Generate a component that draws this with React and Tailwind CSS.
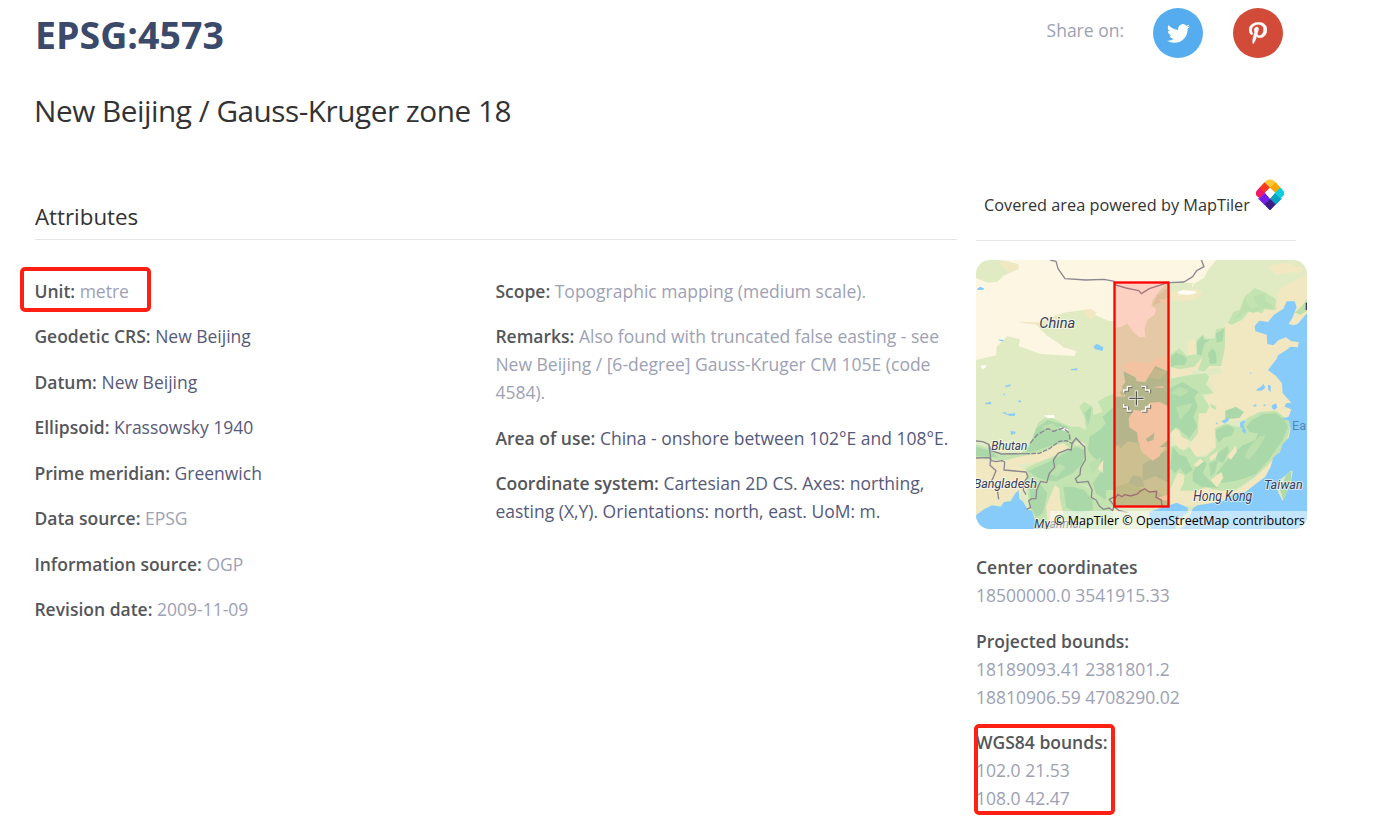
import React from "react";

function Field({ label, value, tone = "text-[#9da1b5]", mark = false }) {
  return (
    <p className="relative mb-[17.45px]">
      {mark && (
        <span className="absolute -left-[14px] -top-[10px] h-[45px] w-[131px] rounded-[5px] border-4 border-[#ff2014]" />
      )}
      <span className="font-semibold text-[#54565a]">{label}</span>{" "}
      <span className={tone}>{value}</span>
    </p>
  );
}

function TwitterIcon() {
  return (
    <svg viewBox="0 0 24 24" className="ml-[1px] h-[23px] w-[23px]" fill="#fff">
      <path d="M23.95 4.57a10 10 0 0 1-2.82.77 4.96 4.96 0 0 0 2.16-2.72c-.95.55-2 .95-3.13 1.18a4.92 4.92 0 0 0-8.38 4.48A13.94 13.94 0 0 1 1.64 3.16a4.92 4.92 0 0 0 1.52 6.57 4.9 4.9 0 0 1-2.23-.61v.06a4.92 4.92 0 0 0 3.95 4.83 5 5 0 0 1-2.21.08 4.94 4.94 0 0 0 4.6 3.42A9.87 9.87 0 0 1 0 19.54a13.99 13.99 0 0 0 7.56 2.21c9.05 0 14-7.5 14-13.98 0-.21 0-.42-.02-.63a9.94 9.94 0 0 0 2.46-2.55z" />
    </svg>
  );
}

function PinterestIcon() {
  return (
    <svg viewBox="0 0 384 512" className="h-[22px] w-[18px]" preserveAspectRatio="none" fill="#fff" stroke="#fff" strokeWidth="10">
      <path d="M204 6.5C101.400 6.500 0 74.900 0 185.600 0 256 39.600 296 63.600 296c9.900 0 15.600-27.600 15.600-35.400 0-9.300-23.700-29.100-23.700-67.800 0-80.400 61.200-137.400 140.400-137.400 68.100 0 118.500 38.700 118.500 109.800 0 53.100-21.300 152.700-90.300 152.700-24.900 0-46.200-18-46.200-43.800 0-37.800 26.400-74.400 26.400-113.400 0-66.200-93.900-54.200-93.900 25.800 0 16.800 2.100 35.400 9.600 50.700-13.800 59.400-42 147.900-42 209.100 0 18.900 2.700 37.500 4.500 56.400 3.400 3.800 1.700 3.400 6.900 1.500 50.400-69 48.600-82.500 71.400-172.800 12.300 23.400 44.100 36 69.300 36 106.200 0 153.900-103.500 153.900-196.800C384 71.300 298.200 6.500 204 6.500z" />
    </svg>
  );
}

function MapTilerLogo() {
  return (
    <svg viewBox="0 0 90 98" className="h-[33px] w-[30px] shrink-0">
      <defs>
        <clipPath id="drop">
          <path d="M45 97 L9 61 Q-4 46 8 34 L31 10 Q45-3 59 10 L82 34 Q94 46 81 61Z" />
        </clipPath>
      </defs>
      <g clipPath="url(#drop)">
        <path d="M45-13 73 15 45 31 17 15Z" fill="#fbc935" />
        <path d="M60 14 68 6 90 30 60 44 45 29Z" fill="#faa600" />
        <path d="M30 14 45 29 30 44 12 29 22 6Z" fill="#fc3b20" />
        <path d="M14 28 31 44 15 61 -6 44Z" fill="#f01963" />
        <path d="M76 28 96 44 75 61 60 44Z" fill="#05d0df" />
        <path d="M60 44 76 60 84 60 62 82 45 61Z" fill="#03a1c4" />
        <path d="M30 44 45 61 28 82 6 60 14 60Z" fill="#761ee8" />
        <path d="M45 61 62 79 45 99 28 79Z" fill="#3d1c88" />
      </g>
      <path d="M45 29 60 44 45 61 30 44Z" fill="#fff" />
    </svg>
  );
}

function MapLabel({ x, y, w, size = 40, children }) {
  return (
    <text
      x={x}
      y={y}
      fontSize={size}
      textLength={w}
      lengthAdjust="spacingAndGlyphs"
      fontStyle="italic"
      fontWeight="400"
      fontFamily="Roboto, sans-serif"
      fill="#3a3c56"
      stroke="#fff"
      strokeWidth="6"
      strokeOpacity="0.6"
      strokeLinejoin="round"
      paintOrder="stroke"
    >
      {children}
    </text>
  );
}

const lakes = [
  "M4 86 12 80 24 85 22 90 4 90Z",
  "M66 239 82 239 82 244 72 243Z",
  "M352 260 362 251 382 262 380 273 358 268Z",
  "M283 328 304 325 304 331 287 331Z",
  "M86 378 103 373 104 378 90 382Z",
  "M83 399 88 405 83 407Z",
  "M27 429 44 425 46 433 28 433Z",
  "M126 423 134 420 134 427 128 427Z",
  "M78 458 88 456 92 462 118 460 117 467 102 468Z",
  "M104 512 118 515 118 521 105 524Z",
  "M821 337 827 340 823 342Z",
  "M842 388 856 380 862 371 868 384 856 392 842 392Z",
  "M876 374 884 377 884 397 877 389Z",
  "M736 484 750 476 760 475 756 484 745 490Z",
  "M718 488 726 488 724 494Z",
  "M792 488 804 480 808 485 802 492 805 505 810 512 807 521 798 513 800 505 793 501Z",
  "M832 436 840 433 842 438 833 440Z",
  "M860 436 869 433 868 439Z",
  "M887 436 900 430 904 442 896 450 888 445Z",
];

const lightGreen = [
  "M582 285 610 265 632 288 662 282 661 240 680 224 690 236 716 235 720 208 748 202 746 268 735 318 700 318 685 335 666 330 680 290 655 320 610 328 582 320Z",
  "M755 190 772 156 790 150 806 110 836 84 870 98 900 118 898 150 866 148 858 160 822 150 796 180 768 194Z",
  "M582 356 640 346 690 340 700 352 690 372 712 400 678 404 700 440 690 460 668 460 666 520 645 545 616 530 600 505 582 520Z",
  "M582 560 600 556 622 572 640 560 660 590 690 590 720 562 716 505 750 490 780 500 800 500 810 476 850 456 900 452 936 480 944 500 925 560 898 590 870 620 838 650 800 676 770 694 720 690 690 682 660 692 612 692 624 660 618 642 604 640 594 662 582 690Z",
  "M700 430 722 440 718 450 704 440Z",
  "M310 440 324 425 350 440 352 465 380 455 366 425 390 410 416 400 416 740 392 744 362 724 340 680 300 668 298 640 310 600 330 580 328 550 290 540 270 520 310 500 330 510 325 470Z",
  "M0 553 45 566 70 586 135 578 170 545 185 490 215 468 240 480 282 500 310 500 310 540 280 560 255 580 240 605 190 610 140 600 70 600 0 592Z",
  "M150 625 200 600 280 552 330 560 326 600 300 640 300 668 340 684 360 720 412 750 412 807 180 807 176 770 160 745 155 700Z",
];

const deepGreen = [
  "M584 290 600 278 620 286 634 296 625 316 606 314 584 320Z",
  "M662 250 680 226 684 240 705 238 684 252 676 286 663 282Z",
  "M720 220 744 206 740 244 722 248Z",
  "M696 280 710 265 720 278 722 310 702 312Z",
  "M582 384 620 366 668 396 655 412 665 440 652 470 664 500 640 535 612 510 600 500 582 518Z",
  "M748 452 780 440 804 456 790 474 748 478Z",
  "M720 510 754 494 776 506 766 528 744 532 728 548 720 530Z",
  "M810 500 828 480 860 462 900 460 925 480 936 500 920 540 898 570 878 600 840 642 802 656 770 664 735 668 722 640 748 606 774 580 800 556 838 540 846 520 820 516Z",
  "M722 582 755 558 758 576 740 610 720 600Z",
  "M700 610 726 600 716 640 704 650Z",
  "M660 620 680 598 692 612 680 640 705 665 726 684 676 680 650 664 650 640Z",
  "M590 560 610 584 630 590 650 630 628 644 612 624 596 640 582 624Z",
  "M325 460 346 440 344 466 336 494Z",
  "M340 530 372 510 390 490 380 470 414 440 414 690 390 690 390 720 360 700 350 670 372 640 376 606 350 590 336 570Z",
  "M0 560 44 572 66 592 0 588Z",
  "M164 550 180 505 216 480 246 490 275 500 286 540 250 548 180 572 150 578Z",
  "M156 634 230 600 300 560 326 570 320 610 290 640 240 664 205 660 180 650Z",
  "M160 680 190 670 214 700 200 760 180 770 164 740Z",
  "M262 680 290 680 324 690 350 720 350 750 300 760 270 740Z",
];

const borders = [
  "M222 0 240 4 246 26 267 56 330 60 384 58 416 64",
  "M580 68 624 66 650 50 662 32 684 20 676 0",
  "M0 543 20 545 38 553 46 572 76 582 148 581",
  "M0 594 40 593 46 602 60 605 78 602 86 606 84 630 150 636 156 650 146 664 142 690 150 704",
  "M44 596 42 616 60 632 52 652 46 664 64 688 68 718",
  "M38 553 42 578 44 596",
  "M152 748 164 742 158 722 168 716 180 716 182 690 194 664 212 668 220 640 236 622 232 600 246 580 276 568 286 570 288 550 296 540 300 534 316 552 326 560 328 600 314 624 312 644 298 656 304 668 336 664 348 690 346 712 360 720 370 738 382 748 400 744 410 752 414 736 400 718 416 710",
  "M414 740 430 752 454 757",
];

const cursorCorners =
  "M443 398V390H454V379H467 M496 379H509V390H520V398 M443 432V441H454V453H467 M496 453H509V441H520V432";

function CoverageMap() {
  return (
    <svg viewBox="0 0 993 807" className="block h-[269px] w-[331px]">
      <rect width="993" height="807" fill="#e1ebc3" />
      <path d="M0 54 34 68 64 65 82 48 128 26 126 12 70 0H724L700 22 684 60 656 70 648 84 600 72 416 74V184L396 182 360 166 322 150 262 158 220 176 176 190 214 228 246 248 262 262 302 274 296 288 192 282 128 258 132 238 94 228 62 260 60 286 0 300Z" fill="#fdf6e3" />
      <path d="M580 66 630 66 660 50 690 24 700 0H760L720 6 690 50 684 66 650 72 640 110 600 110 580 120Z" fill="#e1ebc3" />
      <path d="M720 0H676L684 20 662 34 650 54 624 68 656 70 684 54 696 30Z" fill="#fdf6e3" />
      <g fill="#f1e8c2">
        <path d="M70 8 100 4 104 12 128 14 128 28 96 36 82 22Z" />
        <path d="M128 185 190 187 214 176 250 160 225 180 185 194 144 190Z" />
        <path d="M320 150 344 146 362 158 344 178 330 168Z" />
        <path d="M582 96 660 86 680 98 662 118 620 124 582 122Z" />
        <path d="M876 18 930 8 985 26 970 40 940 36 900 44Z" />
        <path d="M993 44 960 60 915 84 904 104 898 150 862 146 822 154 802 182 748 190 746 268 736 318 690 330 660 328 640 344 582 354 582 322 640 326 690 270 700 300 726 310 740 340 690 348 704 370 712 398 686 412 700 440 668 462 666 520 645 550 636 562 664 590 690 582 720 560 718 510 752 482 810 480 850 454 900 452 938 478 993 440V160Z" />
        <path d="M633 244 660 238 658 290 636 284Z" />
        <path d="M60 606 130 590 190 580 240 554 286 545 280 562 240 590 190 606 120 612 160 640 150 690 110 710 70 736 30 742 0 768V596Z" />
        <path d="M582 520 598 500 622 540 636 552 622 572 600 556Z" />
        <path d="M582 690 596 660 608 638 626 644 624 670 612 690 660 690 690 680 720 690 780 694 820 666 860 632 885 600 900 590 880 640 868 660 820 700 740 722 680 740 580 736Z" />
      </g>
      {lightGreen.map((d) => (
        <path key={d} d={d} fill="#c3e3b1" />
      ))}
      {deepGreen.map((d) => (
        <path key={d} d={d} fill="#aad8a8" />
      ))}
      <g fill="#bbdfad">
        <path d="M772 180 794 154 806 118 822 144 850 142 832 112 866 100 868 126 888 134 890 146 866 142 834 158 806 152 790 172Z" />
        <path d="M340 610 376 590 370 620 346 640Z" />
        <path d="M820 560 850 530 870 526 850 560 820 600 806 590Z" />
        <path d="M600 440 650 430 640 450 612 480Z" />
        <path d="M220 640 250 610 270 622 242 650Z" />
        <path d="M195 500 230 490 250 506 216 514Z" />
        <path d="M584 400 610 380 640 392 616 410Z" />
      </g>
      <g fill="#f1e8c2">
        <path d="M606 505 618 532 640 542 634 560 610 566 598 548Z" />
        <path d="M700 590 726 574 720 592 704 604Z" />
        <path d="M755 588 780 556 782 576 764 600Z" />
        <path d="M652 616 672 596 684 604 664 620Z" />
        <path d="M704 660 736 636 742 654 722 682Z" />
        <path d="M596 660 608 638 626 646 622 672 606 700 590 690Z" />
        <path d="M365 625 382 600 380 640Z" />
        <path d="M210 740 236 676 250 685 252 720 262 760 232 790 214 786Z" />
        <path d="M72 606 130 590 190 580 240 554 262 550 280 562 240 586 190 606 120 614Z" />
      </g>
      <path d="M605 96 620 90 655 93 662 98 640 104 608 103Z M204 466 234 465 236 474 214 475Z M248 500 278 508 276 515 262 512Z M14 318 28 314 30 322 20 328Z" fill="#fffdf5" />
      <path d="M993 160 965 192 952 196 938 192 950 172 962 142 956 124H932L922 146 894 164 876 186 850 182 836 198 838 214 872 224 874 252 892 256 908 240 930 232 946 244 968 246 966 262 944 260 928 272 906 286 902 296 888 314 876 330 900 348 918 370 920 400 946 428 930 430 926 440 946 448 938 470 918 476 938 482 944 506 938 534 920 552 912 576 892 592 884 620 868 650 844 668 808 696 776 700 740 724 690 732 664 736 652 744 634 742 602 728 580 736 560 742 520 756 524 807H993Z" fill="#87cbfa" />
      <path d="M0 766 24 748 48 736 74 740 84 726 104 724 118 700 128 690 130 716 140 724 156 750 168 752 178 784 184 807H0Z" fill="#87cbfa" />
      <path d="M945 632 950 634 944 672 928 706 920 724 908 700 902 680 916 656Z" fill="#e1ebc3" />
      <path d="M930 644 946 634 944 668 922 720 912 690Z" fill="#b0daaa" />
      <path d="M602 782 634 758 640 786 612 807H598Z M634 734 652 742 638 776Z" fill="#d8e7bd" />
      <path d="M956 158 974 142 993 118V152L974 164Z" fill="#bedfab" />
      {lakes.map((d) => (
        <path key={d} d={d} fill="#87cbfa" />
      ))}
      <g fill="none" stroke="#8c878e" strokeWidth="4" strokeLinejoin="round">
        {borders.map((d) => (
          <path key={d} d={d} />
        ))}
        <path d="M148 581 190 580 220 566 250 544 270 542 292 552" strokeDasharray="14 4" />
        <path d="M162 550 184 524 216 506 232 514 262 504 280 520 282 542" strokeDasharray="16 5" />
      </g>

      <MapLabel x="190" y="205" w="108" size="45">China</MapLabel>
      <MapLabel x="46" y="569" w="108" size="38">Bhutan</MapLabel>
      <MapLabel x="-7" y="684" w="190" size="39">Bangladesh</MapLabel>
      <MapLabel x="175" y="805" w="145" size="38">Myanmar</MapLabel>
      <MapLabel x="652" y="724" w="177" size="42">Hong Kong</MapLabel>
      <MapLabel x="864" y="686" w="116" size="39">Taiwan</MapLabel>
      <text x="948" y="509" fontSize="38" fontFamily="Roboto, sans-serif" fill="#5486b5">Ea</text>
      <path d="M989 128H993V150H989Z" fill="#3f415c" />

      <rect x="416" y="68" width="162" height="672" fill="#e5c8a5" />
      <path d="M416 68H576L550 92 530 120 526 138 540 146 536 164 514 180 506 204 508 230 490 232 472 216 454 190 438 200 416 204Z" fill="#fcd1c2" />
      <path d="M544 106 576 84V110L552 128 530 136Z" fill="#e0bd99" />
      <g fill="#f3c3a1">
        <path d="M550 116 576 122 574 130 552 126Z" />
        <path d="M438 316 470 304 520 310 548 292 576 288V330L542 322 520 350 498 362 476 348 452 338Z" />
      </g>
      <path d="M442 334 478 352 482 364 508 366 538 318 578 336V560L540 550 470 560 416 600V410L448 410 438 380 448 366Z" fill="#b5b58c" />
      <path d="M516 352 536 326 574 336 550 358Z M430 400 446 380 442 410Z" fill="#c2b88c" />
      <path d="M416 560 450 544 486 548 500 580 540 600 578 550V740H416Z" fill="#ccc090" />
      <path d="M500 612 578 568V668L536 648 500 664Z M470 646 494 650 506 680 478 682 452 678Z M426 540 460 540 432 566Z" fill="#b7b68d" />
      <path d="M416 680 456 670 510 690 556 702 576 720V740H416Z" fill="#c0ba87" />
      <path d="M458 474 474 450 500 454 522 428 552 426 578 440V546L554 560 552 588 530 602 514 588 498 568 486 544 484 518 460 502Z" fill="#f3c3a1" />
      <path d="M510 536 536 518 532 540 514 546Z M550 562 576 540V560Z" fill="#b5b58c" />
      <path d="M548 712 576 704V722L556 720Z M530 382 560 378 564 384Z" fill="#f3c3a1" />
      <path d="M416 74 450 84 470 88 488 92 496 101 520 86 576 68" fill="none" stroke="#a17779" strokeWidth="4" />
      <path d="M416 716 426 704 438 710 446 704 464 708 484 702 492 694 506 686 520 696 542 694 540 712 556 720 558 738" fill="none" stroke="#a06e70" strokeWidth="4" />
      <rect x="415.500" y="67.500" width="162" height="672" fill="none" stroke="#ff0000" strokeWidth="7" />

      <path d={cursorCorners} fill="none" stroke="#77776a" strokeWidth="7" transform="translate(2 2)" />
      <path d={cursorCorners} fill="none" stroke="#fff" strokeWidth="4" />
      <path d="M457 415H505 M481 391V439" stroke="#e4e1d2" strokeWidth="10" />
      <path d="M460 415H478 M484 415H503 M481 394V412 M481 418V436" stroke="#333" strokeWidth="3" />
      <rect x="479" y="413" width="4" height="4" fill="#333" />
    </svg>
  );
}

export default function App() {
  return (
    <div className="flex h-[818px] w-[1387px] flex-col overflow-hidden bg-white pl-[35px] font-['Open_Sans',sans-serif] text-[17.5px] leading-[28px]">
      <header className="flex h-[171px] justify-between pr-[104px]">
        <div>
          <h1 className="pt-[10px] text-[37.5px] font-bold leading-[50px] text-[#3b4a6b]">EPSG:4573</h1>
          <h2 className="-ml-[1px] mt-[30px] text-[29.750px] leading-[42px] tracking-[-0.48px] text-[#333]">New Beijing / Gauss-Kruger zone 18</h2>
        </div>
        <div className="flex pt-2">
          <span className="mr-[29px] mt-[8px] text-[#9da1b5]">Share on:</span>
          <a className="mr-[30px] flex h-[50px] w-[50px] items-center justify-center rounded-full bg-[#55acee]">
            <TwitterIcon />
          </a>
          <a className="flex h-[50px] w-[50px] items-center justify-center rounded-full bg-[#d24a38]">
            <PinterestIcon />
          </a>
        </div>
      </header>

      <div className="flex gap-[19px]">
        <main className="w-[922px]">
          <h3 className="h-[69px] border-b border-[#e5e5e5] pt-[30px] text-[22.300px] leading-[32px] text-[#333]">Attributes</h3>
          <div className="-ml-[0.600px] flex pt-[36.900px]">
            <div className="w-[461px]">
              <Field label="Unit:" value="metre" mark />
              <Field label="Geodetic CRS:" value="New Beijing" tone="text-[#56597a]" />
              <Field label="Datum:" value="New Beijing" tone="text-[#56597a]" />
              <Field label="Ellipsoid:" value="Krassowsky 1940" tone="text-[#56597a]" />
              <Field label="Prime meridian:" value="Greenwich" tone="text-[#56597a]" />
              <Field label="Data source:" value="EPSG" />
              <Field label="Information source:" value="OGP" />
              <Field label="Revision date:" value="2009-11-09" />
            </div>
            <div className="w-[461px]">
              <Field label="Scope:" value="Topographic mapping (medium scale)." />
              <Field
                label="Remarks:"
                value="Also found with truncated false easting - see New Beijing / [6-degree] Gauss-Kruger CM 105E (code 4584)."
              />
              <Field label="Area of use:" value="China - onshore between 102°E and 108°E." tone="text-[#56597a]" />
              <Field
                label="Coordinate system:"
                value="Cartesian 2D CS. Axes: northing, easting (X,Y). Orientations: north, east. UoM: m."
                tone="text-[#56597a]"
              />
            </div>
          </div>
        </main>

        <aside className="w-[331px]">
          <div className="flex h-[70px] w-[320px] border-b border-[#e5e5e5] pl-[8px] pt-[7px]">
            <span className="mr-[5px] mt-[13px] whitespace-nowrap text-[16.300px] text-[#333]">Covered area powered by MapTiler</span>
            <MapTilerLogo />
          </div>
          <div className="relative mt-[19px] h-[269px] overflow-hidden rounded-[14px]">
            <CoverageMap />
            <div className="absolute bottom-0 right-0 h-[18px] whitespace-nowrap bg-white/50 pl-1 pr-[2px] text-[12.550px] leading-[19px] text-black">
              © MapTiler © OpenStreetMap contributors
            </div>
          </div>
          <div className="pt-[24px] text-[#9da1b5]">
            <p className="mb-[17.500px]">
              <span className="font-semibold text-[#54565a]">Center coordinates</span>
              <br />
              18500000.0 3541915.33
            </p>
            <p className="mb-[17.500px]">
              <span className="font-semibold text-[#54565a]">Projected bounds:</span>
              <br />
              18189093.41 2381801.2
              <br />
              18810906.59 4708290.02
            </p>
            <p className="relative">
              <span className="font-semibold text-[#54565a]">WGS84 bounds:</span>
              <br />
              102.0 21.53
              <br />
              108.0 42.47
              <span className="absolute -left-[2.500px] -top-[4px] h-[91px] w-[141px] rounded-[5px] border-4 border-[#ff2014]" />
            </p>
          </div>
        </aside>
      </div>
    </div>
  );
}
